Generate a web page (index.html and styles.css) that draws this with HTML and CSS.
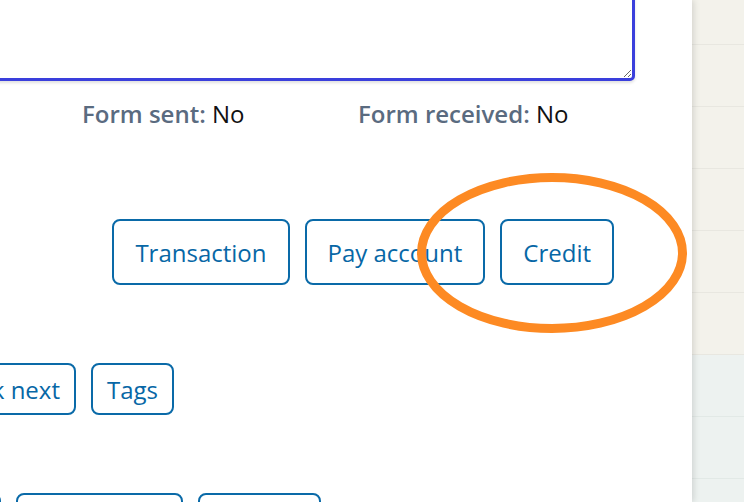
FILE: index.html
```
<html>
  <head>
    <title>Document form</title>
    <link rel="stylesheet" href="styles.css">
  </head>
  <body>
    <div class="panel">
      <textarea class="notes"></textarea>
      <div class="status-line">
        <span class="status"><b>Form sent:</b> No</span>
        <span class="status"><b>Form received:</b> No</span>
      </div>
      <div class="btn-row main-actions">
        <button class="act-btn big">Transaction</button>
        <button class="act-btn big">Pay account</button>
        <button class="act-btn big">Credit</button>
      </div>
      <div class="btn-row second-actions">
        <button class="act-btn">Check next</button>
        <button class="act-btn">Tags</button>
      </div>
      <div class="btn-row third-actions">
        <button class="act-btn">Archive</button>
        <button class="act-btn">Attachment</button>
        <button class="act-btn">Preview</button>
      </div>
      <svg class="mark" width="290" height="180" viewBox="0 0 290 180">
        <ellipse cx="145" cy="90" rx="130.5" ry="75.5" fill="none" stroke="#fd8a23" stroke-width="9"/>
      </svg>
    </div>
    <div class="side">
      <div class="side-row"></div>
      <div class="side-row"></div>
      <div class="side-row"></div>
      <div class="side-row"></div>
      <div class="side-row"></div>
      <div class="side-row"></div>
      <div class="side-row teal"></div>
      <div class="side-row teal"></div>
      <div class="side-row teal"></div>
    </div>
  </body>
</html>
```

FILE: styles.css
```
* {
  box-sizing: border-box;
}
body {
  margin: 0;
  height: 502px;
  overflow: hidden;
  display: flex;
  background-color: #edf2f0;
  font-family: "Open Sans", sans-serif;
}
.panel {
  position: relative;
  width: 692px;
  flex: none;
  background-color: white;
  box-shadow: 2px 0 6px rgba(0, 0, 0, 0.12);
  z-index: 1;
}
.notes {
  display: block;
  width: 720px;
  height: 160px;
  margin: -79px 0 0 -85px;
  border: 3px solid #3a3fdc;
  border-radius: 5px;
  box-shadow: 0 2px 3px rgba(0, 0, 0, 0.12);
  outline: none;
}
.status-line {
  display: flex;
  padding: 13px 0 0 82px;
  font-size: 24px;
  line-height: 40px;
  color: #111;
}
.status {
  width: 276px;
}
.status b {
  font-weight: 600;
  color: #5a6b80;
}
.btn-row {
  display: flex;
  gap: 15px;
}
.main-actions {
  justify-content: flex-end;
  padding-right: 78px;
  margin-top: 85px;
}
.second-actions {
  justify-content: flex-end;
  margin-top: 78px;
  width: 174px;
}
.third-actions {
  margin: 78px 0 0 -118px;
}
.third-actions .act-btn {
  padding: 0 16px;
}
.act-btn {
  height: 52px;
  padding: 0 14px;
  background-color: white;
  border: 2px solid #0a6aa8;
  border-radius: 8px;
  color: #0767a6;
  font-family: "Open Sans", sans-serif;
  font-size: 24px;
  white-space: nowrap;
}
.act-btn.big {
  height: 66px;
  padding: 0 21px;
}
.mark {
  position: absolute;
  left: 407px;
  top: 163px;
}
.side {
  flex: 1;
  margin-top: -17px;
}
.side-row {
  height: 62px;
  background-color: #f3f2eb;
  border-bottom: 1px solid #e8e7e0;
}
.side-row.teal {
  background-color: #edf2f0;
  border-bottom-color: #e2e9e6;
}
```
